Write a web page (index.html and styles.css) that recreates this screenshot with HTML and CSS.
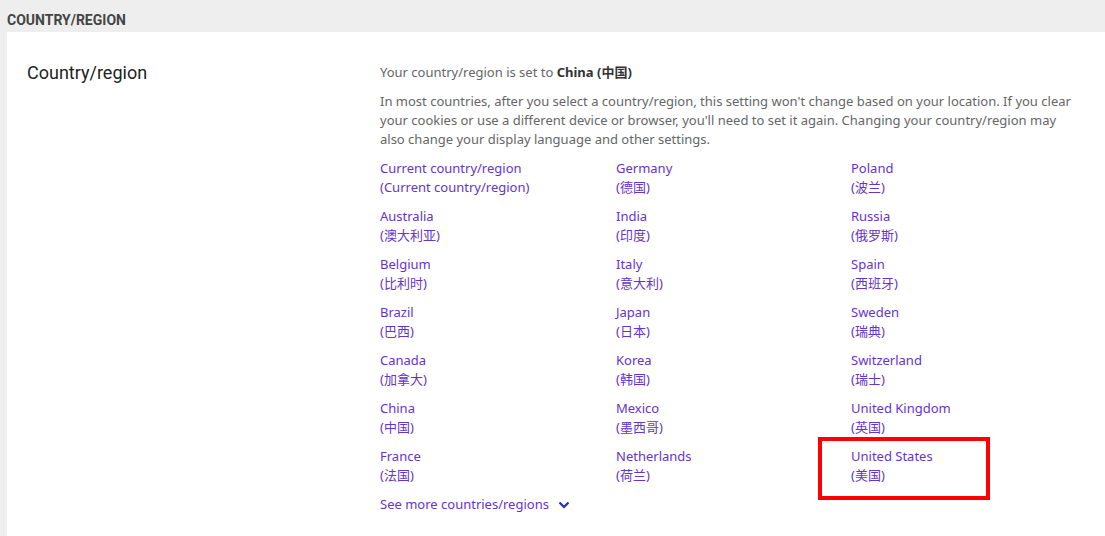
FILE: index.html
```html
<!DOCTYPE html>
<html lang="en">
<head>
  <meta charset="UTF-8">
  <title>Country/region</title>
  <link rel="stylesheet" href="styles.css">
</head>
<body>

  <div class="section-title">COUNTRY/REGION</div>

  <div class="panel">
    <div class="panel-label">Country/region</div>

    <div class="panel-body">
      <p class="current">Your country/region is set to <b>China (中国)</b></p>
      <p>In most countries, after you select a country/region, this setting won't change based on your location. If you clear your cookies or use a different device or browser, you'll need to set it again. Changing your country/region may also change your display language and other settings.</p>

      <div class="country-grid">
        <a href="#">Current country/region<br>(Current country/region)</a>
        <a href="#">Germany<br>(德国)</a>
        <a href="#">Poland<br>(波兰)</a>

        <a href="#">Australia<br>(澳大利亚)</a>
        <a href="#">India<br>(印度)</a>
        <a href="#">Russia<br>(俄罗斯)</a>

        <a href="#">Belgium<br>(比利时)</a>
        <a href="#">Italy<br>(意大利)</a>
        <a href="#">Spain<br>(西班牙)</a>

        <a href="#">Brazil<br>(巴西)</a>
        <a href="#">Japan<br>(日本)</a>
        <a href="#">Sweden<br>(瑞典)</a>

        <a href="#">Canada<br>(加拿大)</a>
        <a href="#">Korea<br>(韩国)</a>
        <a href="#">Switzerland<br>(瑞士)</a>

        <a href="#">China<br>(中国)</a>
        <a href="#">Mexico<br>(墨西哥)</a>
        <a href="#">United Kingdom<br>(英国)</a>

        <a href="#">France<br>(法国)</a>
        <a href="#">Netherlands<br>(荷兰)</a>
        <a href="#" class="marked">United States<br>(美国)<span class="highlight"></span></a>
      </div>

      <a href="#" class="see-more">See more countries/regions
        <svg width="12" height="8" viewBox="0 0 12 8"><path d="M1.5 1.5 L6 6 L10.5 1.5" fill="none" stroke="#1a2fd0" stroke-width="2.2"/></svg>
      </a>
    </div>
  </div>

</body>
</html>
```

FILE: styles.css
```css
body {
  margin: 0;
  background: #eeeeee;
  font-family: "Noto Sans", "Noto Sans CJK SC", sans-serif;
  font-size: 13px;
  line-height: 19px;
  color: #666;
}
.section-title {
  height: 32px;
  box-sizing: border-box;
  padding: 12px 7px 0;
  font-family: Roboto, sans-serif;
  font-weight: bold;
  font-size: 14px;
  line-height: 16px;
  color: #444;
}
.panel {
  margin-left: 7px;
  background: #fff;
  display: flex;
  padding: 31px 26px 22px 20px;
}
.panel-label {
  width: 353px;
  flex-shrink: 0;
  font-family: Roboto, sans-serif;
  font-size: 18px;
  line-height: 19px;
  color: #222;
}
.panel-body {
  flex: 1;
}
.panel-body p {
  margin: 0 0 10px;
}
.current b {
  color: #333;
}
.country-grid {
  display: grid;
  grid-template-columns: 236px 235px 1fr;
  row-gap: 10px;
  margin-bottom: 10px;
}
.country-grid a,
.see-more {
  color: #6633cc;
  text-decoration: none;
  font-family: "Noto Sans", "Noto Sans CJK SC", sans-serif;
}
.marked {
  position: relative;
}
.highlight {
  position: absolute;
  left: -33px;
  top: -10px;
  width: 164px;
  height: 55px;
  border: 4px solid #ff0000;
}
.see-more {
  display: inline-flex;
  align-items: center;
  gap: 9px;
}
```
